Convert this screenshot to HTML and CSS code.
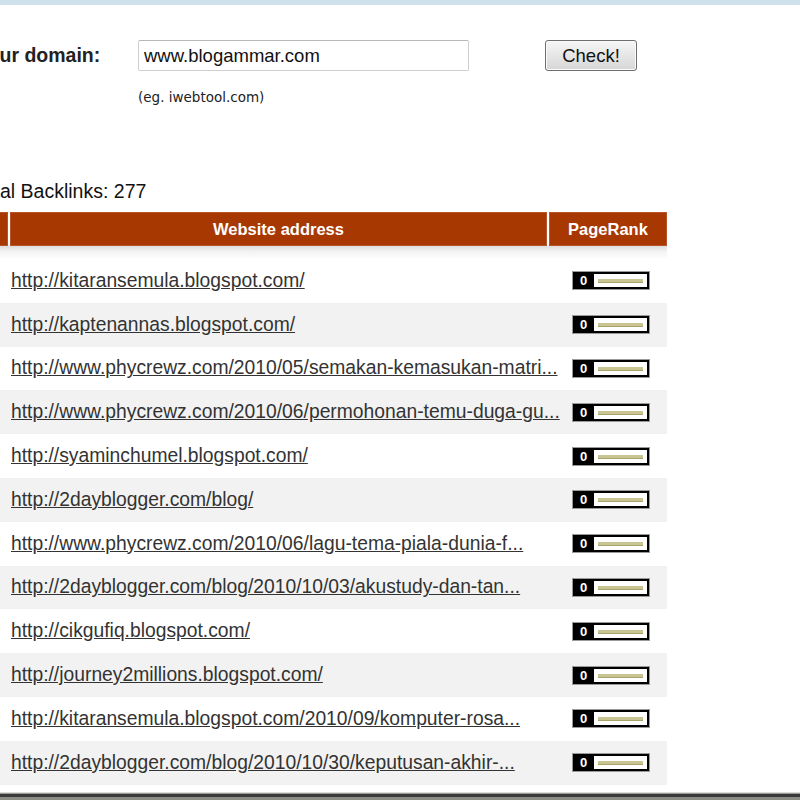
FILE: index.html
```html
<!DOCTYPE html>
<html lang="en">
<head>
    <meta charset="UTF-8">
    <title>Backlink Checker</title>
    <link rel="stylesheet" href="styles.css">
</head>
<body>

    <div class="topbar"></div>

    <div class="page">
        <!-- domain form -->
        <form class="domain-form" onsubmit="return false;">
            <label for="domain" class="domain-label">Your domain:</label>
            <input type="text" id="domain" class="domain-input" value="www.blogammar.com">
            <span></span>
            <button type="submit" class="check-btn">Check!</button>
            <span></span>
            <span class="hint">(eg. iwebtool.com)</span>
        </form>

        <div class="total">Total Backlinks: 277</div>

        <!-- results -->
        <table class="results">
            <colgroup>
                <col class="col-num">
                <col class="col-url">
                <col class="col-pr">
            </colgroup>
            <thead>
                <tr>
                    <th></th>
                    <th>Website address</th>
                    <th>PageRank</th>
                </tr>
                <tr class="shade"><td colspan="3"></td></tr>
            </thead>
            <tbody>
                <tr><td></td><td><a href="#">http://kitaransemula.blogspot.com/</a></td><td><span class="pr"><b>0</b><i></i></span></td></tr>
                <tr><td></td><td><a href="#">http://kaptenannas.blogspot.com/</a></td><td><span class="pr"><b>0</b><i></i></span></td></tr>
                <tr><td></td><td><a href="#">http://www.phycrewz.com/2010/05/semakan-kemasukan-matri...</a></td><td><span class="pr"><b>0</b><i></i></span></td></tr>
                <tr><td></td><td><a href="#">http://www.phycrewz.com/2010/06/permohonan-temu-duga-gu...</a></td><td><span class="pr"><b>0</b><i></i></span></td></tr>
                <tr><td></td><td><a href="#">http://syaminchumel.blogspot.com/</a></td><td><span class="pr"><b>0</b><i></i></span></td></tr>
                <tr><td></td><td><a href="#">http://2dayblogger.com/blog/</a></td><td><span class="pr"><b>0</b><i></i></span></td></tr>
                <tr><td></td><td><a href="#">http://www.phycrewz.com/2010/06/lagu-tema-piala-dunia-f...</a></td><td><span class="pr"><b>0</b><i></i></span></td></tr>
                <tr><td></td><td><a href="#">http://2dayblogger.com/blog/2010/10/03/akustudy-dan-tan...</a></td><td><span class="pr"><b>0</b><i></i></span></td></tr>
                <tr><td></td><td><a href="#">http://cikgufiq.blogspot.com/</a></td><td><span class="pr"><b>0</b><i></i></span></td></tr>
                <tr><td></td><td><a href="#">http://journey2millions.blogspot.com/</a></td><td><span class="pr"><b>0</b><i></i></span></td></tr>
                <tr><td></td><td><a href="#">http://kitaransemula.blogspot.com/2010/09/komputer-rosa...</a></td><td><span class="pr"><b>0</b><i></i></span></td></tr>
                <tr><td></td><td><a href="#">http://2dayblogger.com/blog/2010/10/30/keputusan-akhir-...</a></td><td><span class="pr"><b>0</b><i></i></span></td></tr>
            </tbody>
        </table>
    </div>

    <div class="frame-bottom"></div>

</body>
</html>
```

FILE: styles.css
```css
body {
    margin: 0;
    height: 800px;
    overflow: hidden;
    background-color: #ffffff;
    font-family: "Liberation Sans", Arial, sans-serif;
    color: #1a1a1a;
}
.topbar {
    height: 5px;
    background-color: #cfe1eb;
}
/* content column, scrolled slightly to the right */
.page {
    margin-left: -26px;
    width: 693px;
}
.domain-form {
    display: grid;
    grid-template-columns: 162px 331px 76px 92px;
    align-items: center;
    padding-left: 2px;
    margin: 35px 0 0 0;
}
.domain-label {
    font-size: 19.5px;
    font-weight: bold;
    color: #222;
}
.domain-input {
    height: 31px;
    box-sizing: border-box;
    border: 1px solid #cfcfcf;
    border-top-color: #b8b8b8;
    border-radius: 2px;
    padding: 0 5px;
    font-family: "Liberation Sans", Arial, sans-serif;
    font-size: 18.5px;
    color: #111;
    outline: none;
}
.check-btn {
    height: 31px;
    box-sizing: border-box;
    border: 1px solid #6e6e6e;
    border-radius: 3px;
    background: linear-gradient(#f6f6f6, #e6e6e6 50%, #d6d6d6);
    box-shadow: inset 0 0 0 1px #fbfbfb;
    font-family: "Liberation Sans", Arial, sans-serif;
    font-size: 18.5px;
    color: #111;
    padding: 0;
}
.hint {
    grid-column: 2 / 5;
    margin-top: 18px;
    font-family: "DejaVu Sans", Verdana, sans-serif;
    font-size: 13.5px;
    color: #222;
}
.total {
    margin-top: 75px;
    font-size: 19.5px;
    line-height: 22px;
    color: #111;
}
.results {
    margin-top: 10px;
    width: 693px;
    table-layout: fixed;
    border-collapse: collapse;
}
.col-num { width: 35px; }
.col-url { width: 539px; }
.col-pr  { width: 119px; }
.results th {
    height: 34px;
    padding: 0;
    background-color: #a83802;
    box-shadow: inset 0 0 0 1px #b8532a;
    color: #ffffff;
    font-size: 16.5px;
    font-weight: bold;
    text-align: center;
    border-right: 2px solid #ffffff;
}
.results th:last-child {
    border-right: none;
}
.results .shade td {
    height: 13px;
    padding: 0;
    background: linear-gradient(#dedede, #f3f3f3 45%, #ffffff);
}
.results tbody td {
    height: 43.8px;
    padding: 0;
    vertical-align: middle;
}
.results tbody tr:nth-child(even) {
    background-color: #f2f2f2;
}
.results a {
    display: block;
    padding-left: 2px;
    font-size: 19.3px;
    color: #333333;
    text-decoration: underline;
    white-space: nowrap;
}
.results tbody td:last-child {
    padding-left: 24px;
}
/* pagerank bar */
.pr {
    display: flex;
    width: 78px;
    height: 19px;
    box-sizing: border-box;
    border: 1px solid #9a9a9a;
    background-color: #000;
    padding: 2px 2px 2px 0;
}
.pr b {
    width: 21px;
    color: #ffffff;
    font-size: 13px;
    line-height: 13px;
    text-align: center;
}
.pr i {
    flex: 1;
    background-color: #ffffff;
    position: relative;
}
.pr i::after {
    content: "";
    position: absolute;
    left: 4px;
    right: 4px;
    top: 5px;
    height: 4px;
    background-color: #c9c592;
    border-bottom: 1px solid #a9a46a;
    box-sizing: border-box;
}
.frame-bottom {
    margin-top: 7px;
    height: 8px;
    border-top: 1px solid #dcdcdc;
    background: linear-gradient(#9a9a94 0, #9a9a94 1px, #3a3a3a 1px, #3a3a3a 4px, #8c8c84 4px);
}
```
